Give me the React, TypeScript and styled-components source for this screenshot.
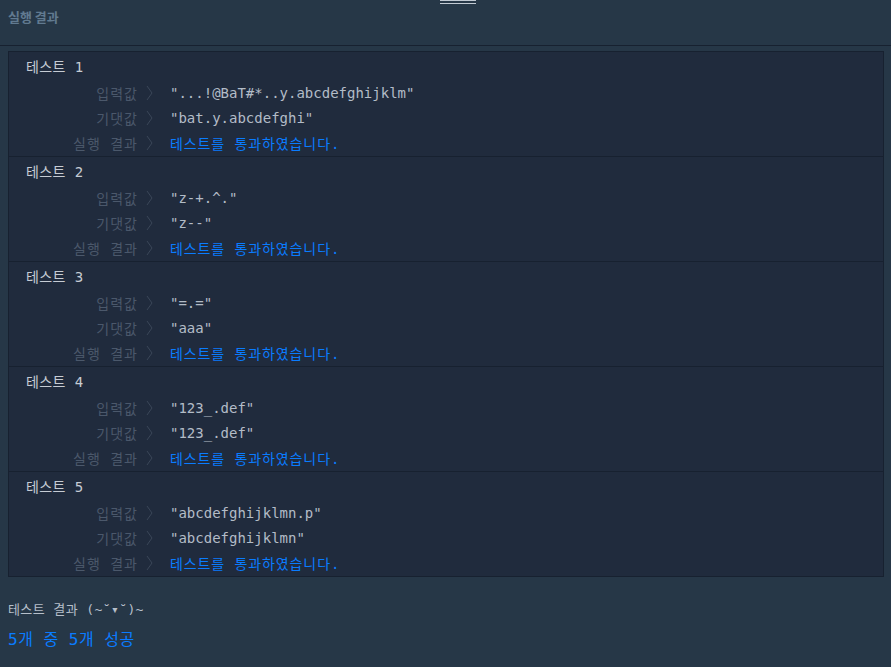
import React from "react";
import styled, { createGlobalStyle } from "styled-components";

interface TestCase {
  input: string;
  expected: string;
}

const cases: TestCase[] = [
  { input: "\"...!@BaT#*..y.abcdefghijklm\"", expected: "\"bat.y.abcdefghi\"" },
  { input: "\"z-+.^.\"", expected: "\"z--\"" },
  { input: "\"=.=\"", expected: "\"aaa\"" },
  { input: "\"123_.def\"", expected: "\"123_.def\"" },
  { input: "\"abcdefghijklmn.p\"", expected: "\"abcdefghijklmn\"" },
];

export default function App() {
  return (
    <>
      <GlobalStyle />
      <Page>
        <Handle />
        <Header>실행 결과</Header>
        <Body>
          <Panel>
            {cases.map((c, i) => (
              <Block key={i}>
                <Title>테스트 {i + 1}</Title>
                <Row>
                  <Label>입력값</Label>
                  <Chevron />
                  <Value>{c.input}</Value>
                </Row>
                <Row>
                  <Label>기댓값</Label>
                  <Chevron />
                  <Value>{c.expected}</Value>
                </Row>
                <Row>
                  <Label>실행 결과</Label>
                  <Chevron />
                  <Value pass>테스트를 통과하였습니다.</Value>
                </Row>
              </Block>
            ))}
          </Panel>
          <Summary>
            <SummaryTitle>테스트 결과 (~˘▾˘)~</SummaryTitle>
            <SummaryScore>5개 중 5개 성공</SummaryScore>
          </Summary>
        </Body>
      </Page>
    </>
  );
}

function Chevron() {
  return (
    <ChevronBox>
      <svg width="7" height="16" viewBox="0 0 7 16">
        <polyline points="1,1 6,8 1,15" fill="none" stroke="#3a4658" strokeWidth="1" />
      </svg>
    </ChevronBox>
  );
}

const GlobalStyle = createGlobalStyle`
  body {
    margin: 0;
    background: #263747;
  }
`

const Page = styled.div`
  position: relative;
  min-height: 667px;
  background: #263747;
  font-family: "DejaVu Sans Mono", "Noto Sans CJK KR", monospace;
`

const Handle = styled.div`
  position: absolute;
  left: 440px;
  top: 0;
  width: 36px;
  height: 4px;
  border-top: 1px solid #c2cad3;
  border-bottom: 1px solid #c2cad3;
  box-sizing: border-box;
`

const Header = styled.div`
  height: 46px;
  box-sizing: border-box;
  padding: 8px 8px 0;
  border-bottom: 1px solid #172130;
  font-family: "Noto Sans CJK KR", sans-serif;
  font-size: 13px;
  font-weight: 700;
  line-height: 17px;
  color: #617a90;
`

const Body = styled.div`
  padding: 5px 7px 0 8px;
`

const Panel = styled.div`
  background: #202b3d;
  border: 1px solid #172130;
`

const Block = styled.div`
  padding: 2px 0 1px;
  border-bottom: 1px solid #172130;

  &:last-child {
    border-bottom: none;
  }
`

const Title = styled.div`
  height: 26px;
  line-height: 26px;
  padding-left: 17px;
  font-size: 14px;
  letter-spacing: 0.4px;
  color: #c6ccd4;
`

const Row = styled.div`
  display: flex;
  align-items: center;
  height: 25px;
  font-size: 14px;
`

const Label = styled.div`
  width: 129px;
  text-align: right;
  letter-spacing: 1px;
  color: #4b586b;
`

const ChevronBox = styled.div`
  display: flex;
  align-items: center;
  width: 32px;
  padding-left: 8px;
  box-sizing: border-box;
`

const Value = styled.div<{ pass?: boolean }>`
  color: ${p => (p.pass ? "#0a7cff" : "#b3bcc7")};
  letter-spacing: ${p => (p.pass ? "0.9px" : "0")};
  white-space: pre;
`

const Summary = styled.div`
  padding-top: 23px;
`

const SummaryTitle = styled.div`
  font-size: 13px;
  line-height: 20px;
  letter-spacing: 0.4px;
  color: #b6bfca;
`

const SummaryScore = styled.div`
  margin-top: 9px;
  font-size: 16px;
  line-height: 22px;
  letter-spacing: 0.5px;
  color: #0a7cff;
`
